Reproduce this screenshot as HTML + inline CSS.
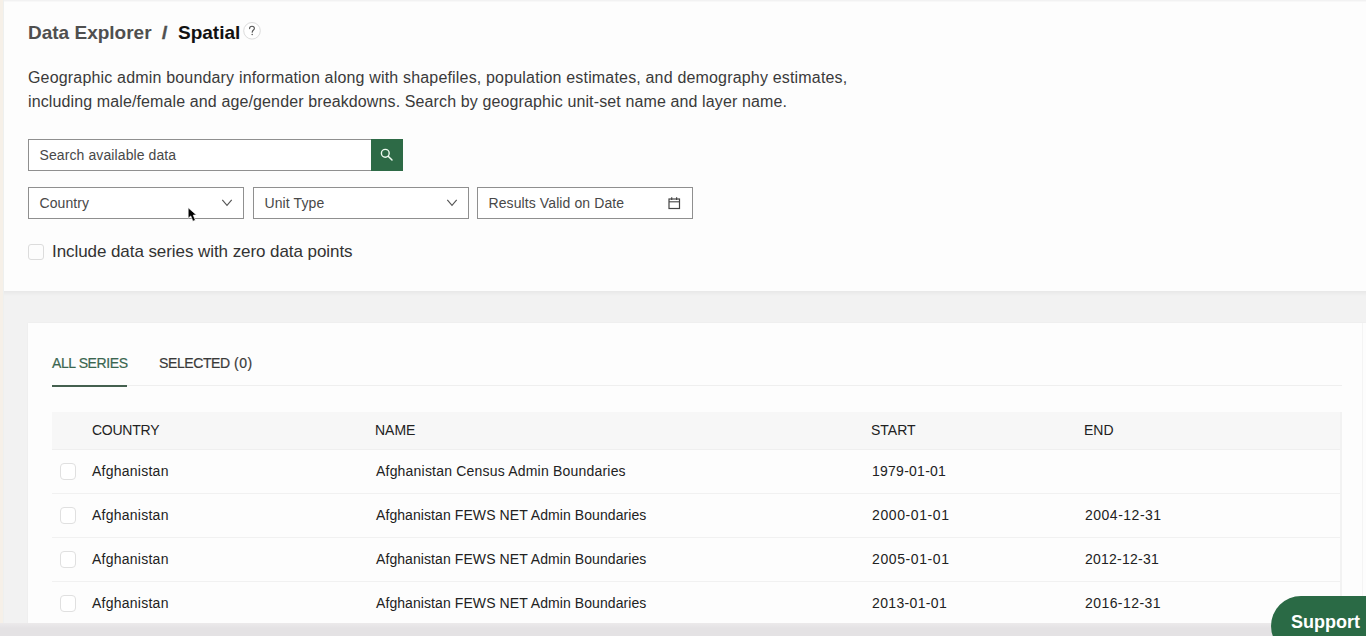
<!DOCTYPE html>
<html><head><meta charset="utf-8">
<style>
*{margin:0;padding:0;box-sizing:border-box}
html,body{width:1366px;height:636px;overflow:hidden;background:#f2f2f2;font-family:"Liberation Sans",sans-serif;color:#333}
#leftstrip{position:absolute;left:0;top:0;width:3px;height:636px;background:#f6f0e8}
#leftline{position:absolute;left:3px;top:0;width:1px;height:636px;background:#eef0ef}
#top{position:absolute;left:4px;top:0;width:1362px;height:291px;background:#fdfdfd;box-shadow:0 1px 3px rgba(0,0,0,.10)}
#topedge{position:absolute;left:4px;top:0;width:1362px;height:2px;background:linear-gradient(#efeff0,#fbfbfb)}
.abs{position:absolute;white-space:nowrap}
#crumb{left:28px;top:21.5px;font-size:19px;font-weight:bold;color:#4f4f4f}
#crumb b{color:#111}
#help{left:243.5px;top:22px;width:17px;height:17px;border:1px solid #dcdcdc;border-radius:50%;font-size:12px;color:#555;text-align:center;line-height:15px;background:#fff}
#desc{left:28px;top:66px;font-size:16px;line-height:24px;color:#3a3a3a;letter-spacing:0.15px}
.box{position:absolute;border:1px solid #8f8f8f;background:#fff;font-size:14px;color:#484848}
.box span{position:absolute;left:10.5px;top:7.4px;white-space:nowrap;letter-spacing:0.1px}
#search{left:28px;top:139px;width:344px;height:32px}
#sbtn{position:absolute;left:371px;top:139px;width:32px;height:32px;background:#2d6a46}
#chk0{position:absolute;left:28px;top:244px;width:16px;height:16px;border:1px solid #dcdcdc;border-radius:3px;background:#fdfdfd}
#inc{left:52px;top:242px;font-size:17px;color:#333;letter-spacing:-0.07px}
#card{position:absolute;left:28px;top:323px;width:1338px;height:301px;background:#fdfdfd;box-shadow:0 0 2px rgba(0,0,0,.04)}
.tab{position:absolute;top:355px;font-size:14px;color:#333;white-space:nowrap;-webkit-text-stroke:0.2px currentColor}
#tabline{position:absolute;left:52px;top:385px;width:1290px;height:1px;background:#efefef}
#tabul{position:absolute;left:52px;top:385px;width:75px;height:2px;background:#44604f}
#thead{position:absolute;left:52px;top:412px;width:1288px;height:38px;background:#f7f7f7;border-bottom:1px solid #efefef}
#theadsh{position:absolute;left:1340px;top:412px;width:2px;height:212px;background:#f2f2f2}
.th{position:absolute;top:422px;font-size:14px;color:#222}
.row{position:absolute;left:52px;width:1288px;height:44px;border-bottom:1px solid #f1f1f1}
.cb{position:absolute;left:8px;top:13px;width:16px;height:17px;border:1.5px solid #e0e0e0;border-radius:4px;background:#fff}
.td{position:absolute;top:13px;font-size:14px;color:#222;white-space:nowrap}
.c1{left:40px;letter-spacing:0.25px}.c2{left:324px;letter-spacing:0.2px}.c3{left:820px;letter-spacing:0.6px}.c4{left:1033px;letter-spacing:0.6px}
#shband{position:absolute;left:4px;top:291px;width:1362px;height:5px;background:linear-gradient(#e8e8e8,#f2f2f2)}
#bottom{position:absolute;left:0;top:623px;width:1366px;height:13px;background:linear-gradient(#eceaeb,#e4e2e4 40%)}
#support{position:absolute;left:1271px;top:596px;width:140px;height:60px;border-radius:30px;background:#2a6a45;color:#fff;font-weight:bold;font-size:18px}
#support span{position:absolute;left:20px;top:15.5px}
</style></head><body>
<div id="top"></div>
<div id="topedge"></div>
<div id="leftstrip"></div>
<div id="leftline"></div>
<div class="abs" id="crumb">Data Explorer&nbsp; <span style="-webkit-text-stroke:0.5px #4f4f4f">/</span> &nbsp;<b>Spatial</b></div>
<svg class="abs" style="left:242px;top:20px" width="20" height="21" viewBox="0 0 20 21"><circle cx="10" cy="10.8" r="8.3" fill="#fff" stroke="#dcdcdc" stroke-width="1"/><path d="M7.6 8.6 C7.6 7.1 8.7 6.3 10 6.3 C11.4 6.3 12.4 7.2 12.4 8.4 C12.4 9.9 10.2 10.2 10.2 12.2" fill="none" stroke="#555" stroke-width="1.1" stroke-linecap="round"/><circle cx="10.2" cy="14.6" r="0.75" fill="#555"/></svg>
<div class="abs" id="desc"><span style="letter-spacing:0.175px">Geographic admin boundary information along with shapefiles, population estimates, and demography estimates,</span><br><span style="letter-spacing:0.12px">including male/female and age/gender breakdowns. Search by geographic unit-set name and layer name.</span></div>
<div class="box" id="search"><span>Search available data</span></div>
<div id="sbtn"><svg width="32" height="32" viewBox="0 0 32 32"><circle cx="14.3" cy="14.3" r="3.9" fill="none" stroke="#eefbf0" stroke-width="1.4"/><line x1="17.2" y1="17.2" x2="21" y2="21" stroke="#eefbf0" stroke-width="1.5" stroke-linecap="round"/></svg></div>
<div class="box" style="left:28px;top:187px;width:216px;height:32px"><span>Country</span>
<svg class="abs" style="left:191.5px;top:10.5px" width="12" height="8" viewBox="0 0 12 8"><path d="M1.3 0.9 L6 6.4 L10.7 0.9" fill="none" stroke="#555" stroke-width="1.15"/></svg></div>
<div class="box" style="left:253px;top:187px;width:216px;height:32px"><span>Unit Type</span>
<svg class="abs" style="left:191.5px;top:10.5px" width="12" height="8" viewBox="0 0 12 8"><path d="M1.3 0.9 L6 6.4 L10.7 0.9" fill="none" stroke="#555" stroke-width="1.15"/></svg></div>
<div class="box" style="left:477px;top:187px;width:216px;height:32px"><span>Results Valid on Date</span>
<svg class="abs" style="left:190px;top:8px" width="14" height="14" viewBox="0 0 14 14"><rect x="1" y="3" width="10.5" height="9.5" fill="none" stroke="#444" stroke-width="1.2"/><line x1="1" y1="5.8" x2="11.5" y2="5.8" stroke="#444" stroke-width="1.1"/><line x1="3.7" y1="1.2" x2="3.7" y2="4" stroke="#444" stroke-width="1.2"/><line x1="8.6" y1="1.2" x2="8.6" y2="4" stroke="#444" stroke-width="1.2"/></svg></div>
<svg class="abs" style="left:186px;top:206px" width="14" height="18" viewBox="0 0 14 18"><path d="M2.2 1.8 L2.2 12.2 L4.8 9.9 L6.9 15.2 L9.3 14.2 L7.2 9.1 L10.4 8.9 Z" fill="#000" stroke="#fff" stroke-width="0.6"/></svg>
<div id="chk0"></div>
<div class="abs" id="inc">Include data series with zero data points</div>
<div id="shband"></div><div id="card"></div>
<div class="tab" style="left:52px;color:#3b6650;letter-spacing:-0.4px">ALL SERIES</div>
<div class="tab" style="left:159px;color:#3a3a3a"><span style="letter-spacing:-0.4px">SELECTED</span><span style="letter-spacing:0.5px"> (0)</span></div>
<div id="tabline"></div>
<div id="tabul"></div>
<div id="thead"></div>
<div id="theadsh"></div>
<div class="th" style="left:92px;letter-spacing:-0.25px">COUNTRY</div>
<div class="th" style="left:375px">NAME</div>
<div class="th" style="left:871px">START</div>
<div class="th" style="left:1084px">END</div>
<div class="row" style="top:450px"><div class="cb"></div><div class="td c1">Afghanistan</div><div class="td c2">Afghanistan Census Admin Boundaries</div><div class="td c3" style="letter-spacing:0.25px">1979-01-01</div><div class="td c4"></div></div>
<div class="row" style="top:494px"><div class="cb"></div><div class="td c1">Afghanistan</div><div class="td c2" style="letter-spacing:0.08px">Afghanistan FEWS NET Admin Boundaries</div><div class="td c3">2000-01-01</div><div class="td c4" style="letter-spacing:0.5px">2004-12-31</div></div>
<div class="row" style="top:538px"><div class="cb"></div><div class="td c1">Afghanistan</div><div class="td c2" style="letter-spacing:0.08px">Afghanistan FEWS NET Admin Boundaries</div><div class="td c3">2005-01-01</div><div class="td c4" style="letter-spacing:0.23px">2012-12-31</div></div>
<div class="row" style="top:582px"><div class="cb"></div><div class="td c1">Afghanistan</div><div class="td c2" style="letter-spacing:0.08px">Afghanistan FEWS NET Admin Boundaries</div><div class="td c3" style="letter-spacing:0.35px">2013-01-01</div><div class="td c4" style="letter-spacing:0.43px">2016-12-31</div></div>
<div style="position:absolute;left:1362px;top:323px;width:1px;height:300px;background:#f4f4f4"></div>
<div id="bottom"></div>
<div id="support"><span>Support</span></div>
</body></html>
